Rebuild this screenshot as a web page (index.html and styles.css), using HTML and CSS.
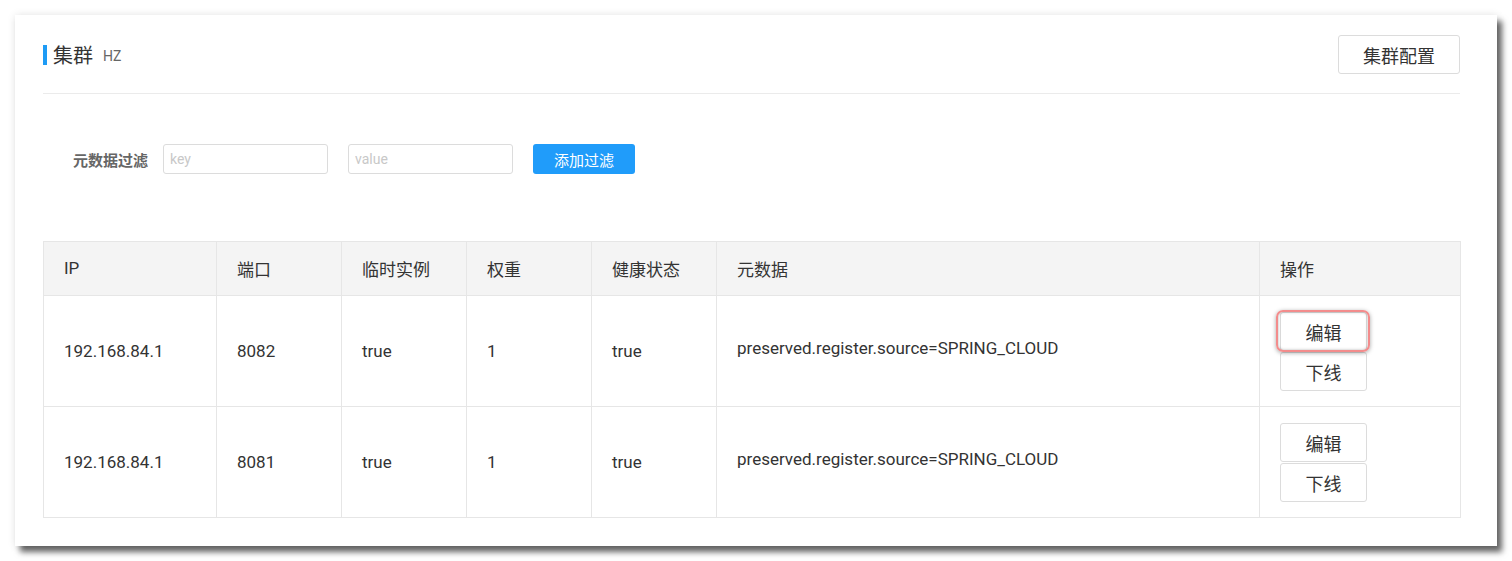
FILE: index.html
```html
<!DOCTYPE html>
<html lang="zh-CN">
<head>
<meta charset="utf-8">
<title>集群</title>
<link rel="stylesheet" href="styles.css">
</head>
<body>
<div class="page">
  <div class="card">
    <div class="card-header">
      <div class="title">
        <span class="title-bar"></span>
        <span class="title-text">集群</span>
        <span class="title-sub">HZ</span>
      </div>
      <button class="btn btn-config">集群配置</button>
    </div>

    <div class="filter">
      <span class="filter-label">元数据过滤</span>
      <input class="filter-input" type="text" placeholder="key">
      <input class="filter-input" type="text" placeholder="value">
      <button class="btn-primary">添加过滤</button>
    </div>

    <table class="grid">
      <colgroup>
        <col class="c-ip"><col class="c-port"><col class="c-eph"><col class="c-weight"><col class="c-health"><col class="c-meta"><col class="c-op">
      </colgroup>
      <thead>
        <tr>
          <th>IP</th><th>端口</th><th>临时实例</th><th>权重</th><th>健康状态</th><th>元数据</th><th>操作</th>
        </tr>
      </thead>
      <tbody>
        <tr>
          <td>192.168.84.1</td>
          <td>8082</td>
          <td>true</td>
          <td>1</td>
          <td>true</td>
          <td><div class="meta">preserved.register.source=SPRING_CLOUD</div></td>
          <td class="ops">
            <button class="btn btn-op hl">编辑</button>
            <button class="btn btn-op">下线</button>
          </td>
        </tr>
        <tr>
          <td>192.168.84.1</td>
          <td>8081</td>
          <td>true</td>
          <td>1</td>
          <td>true</td>
          <td><div class="meta">preserved.register.source=SPRING_CLOUD</div></td>
          <td class="ops">
            <button class="btn btn-op">编辑</button>
            <button class="btn btn-op">下线</button>
          </td>
        </tr>
      </tbody>
    </table>
  </div>
</div>
</body>
</html>
```

FILE: styles.css
```css
* { box-sizing: border-box; }

html, body {
  margin: 0;
  padding: 0;
  background: #ffffff;
}

body {
  font-family: Roboto, "Noto Sans CJK SC", sans-serif;
  color: #333333;
}

.page {
  padding: 15px 15px 20px 15px;
}

.card {
  width: 1482px;
  height: 531px;
  background: #ffffff;
  padding: 20px 37px 0 28px;
  box-shadow: 0 0 8px rgba(0, 0, 0, 0.10), 5px 6px 6px rgba(0, 0, 0, 0.6);
}

.card-header {
  display: flex;
  justify-content: space-between;
  align-items: center;
  padding-bottom: 19px;
  border-bottom: 1px solid #ebebeb;
}

.title {
  display: flex;
  align-items: center;
}

.title-bar {
  width: 4px;
  height: 20px;
  background: #1e9bf5;
  margin-right: 6px;
}

.title-text {
  font-family: "Noto Sans CJK SC", sans-serif;
  font-size: 20px;
  color: #333;
  line-height: 20px;
}

.title-sub {
  font-family: Roboto, sans-serif;
  font-size: 14px;
  color: #666;
  margin-left: 10px;
  padding-top: 3px;
}

.btn {
  font-family: "Noto Sans CJK SC", sans-serif;
  background: #ffffff;
  border: 1px solid #dcdcdc;
  border-radius: 3px;
  color: #333;
  cursor: pointer;
  padding: 0;
}

.btn-config {
  width: 122px;
  height: 39px;
  font-size: 18px;
}

.filter {
  display: flex;
  align-items: center;
  margin-top: 50px;
  padding-left: 30px;
}

.filter-label {
  font-family: "Noto Sans CJK SC", sans-serif;
  font-size: 15px;
  font-weight: 700;
  color: #666;
  width: 90px;
}

.filter-input {
  width: 165px;
  height: 30px;
  border: 1px solid #dcdcdc;
  border-radius: 3px;
  padding: 0 6px;
  font-family: Roboto, sans-serif;
  font-size: 14px;
  color: #333;
  margin-right: 20px;
  outline: none;
}

.filter-input::placeholder {
  color: #c8c8c8;
}

.btn-primary {
  width: 102px;
  height: 30px;
  border: none;
  border-radius: 3px;
  background: #209cfa;
  color: #ffffff;
  font-family: "Noto Sans CJK SC", sans-serif;
  font-size: 15px;
  padding: 0;
}

.grid {
  margin-top: 67px;
  width: 1417px;
  border-collapse: collapse;
  table-layout: fixed;
  border: 1px solid #e6e6e6;
  font-size: 17px;
}

.c-ip { width: 173px; }
.c-port { width: 125px; }
.c-eph { width: 125px; }
.c-weight { width: 125px; }
.c-health { width: 125px; }
.c-meta { width: 543px; }
.c-op { width: 201px; }

.grid th,
.grid td {
  border: 1px solid #e6e6e6;
  text-align: left;
  font-weight: normal;
  padding: 0 20px;
  vertical-align: middle;
  color: #333;
}

.grid th {
  background: #f4f4f4;
  height: 53.5px;
}

.grid td {
  height: 111px;
}

.meta {
  padding-bottom: 6px;
}

.grid td.ops {
  padding: 16px 20px 13px;
}

.btn-op {
  display: block;
  width: 87px;
  height: 39px;
  font-size: 18px;
  margin-bottom: 1px;
}

.hl {
  position: relative;
}

.hl::after {
  content: "";
  position: absolute;
  left: -5px;
  right: -4px;
  top: -3px;
  bottom: -2px;
  border: 2px solid #f38c8c;
  border-radius: 7px;
  box-shadow: 0 1px 4px rgba(0, 0, 0, 0.35), inset 0 0 3px rgba(0, 0, 0, 0.3);
  pointer-events: none;
}
```
